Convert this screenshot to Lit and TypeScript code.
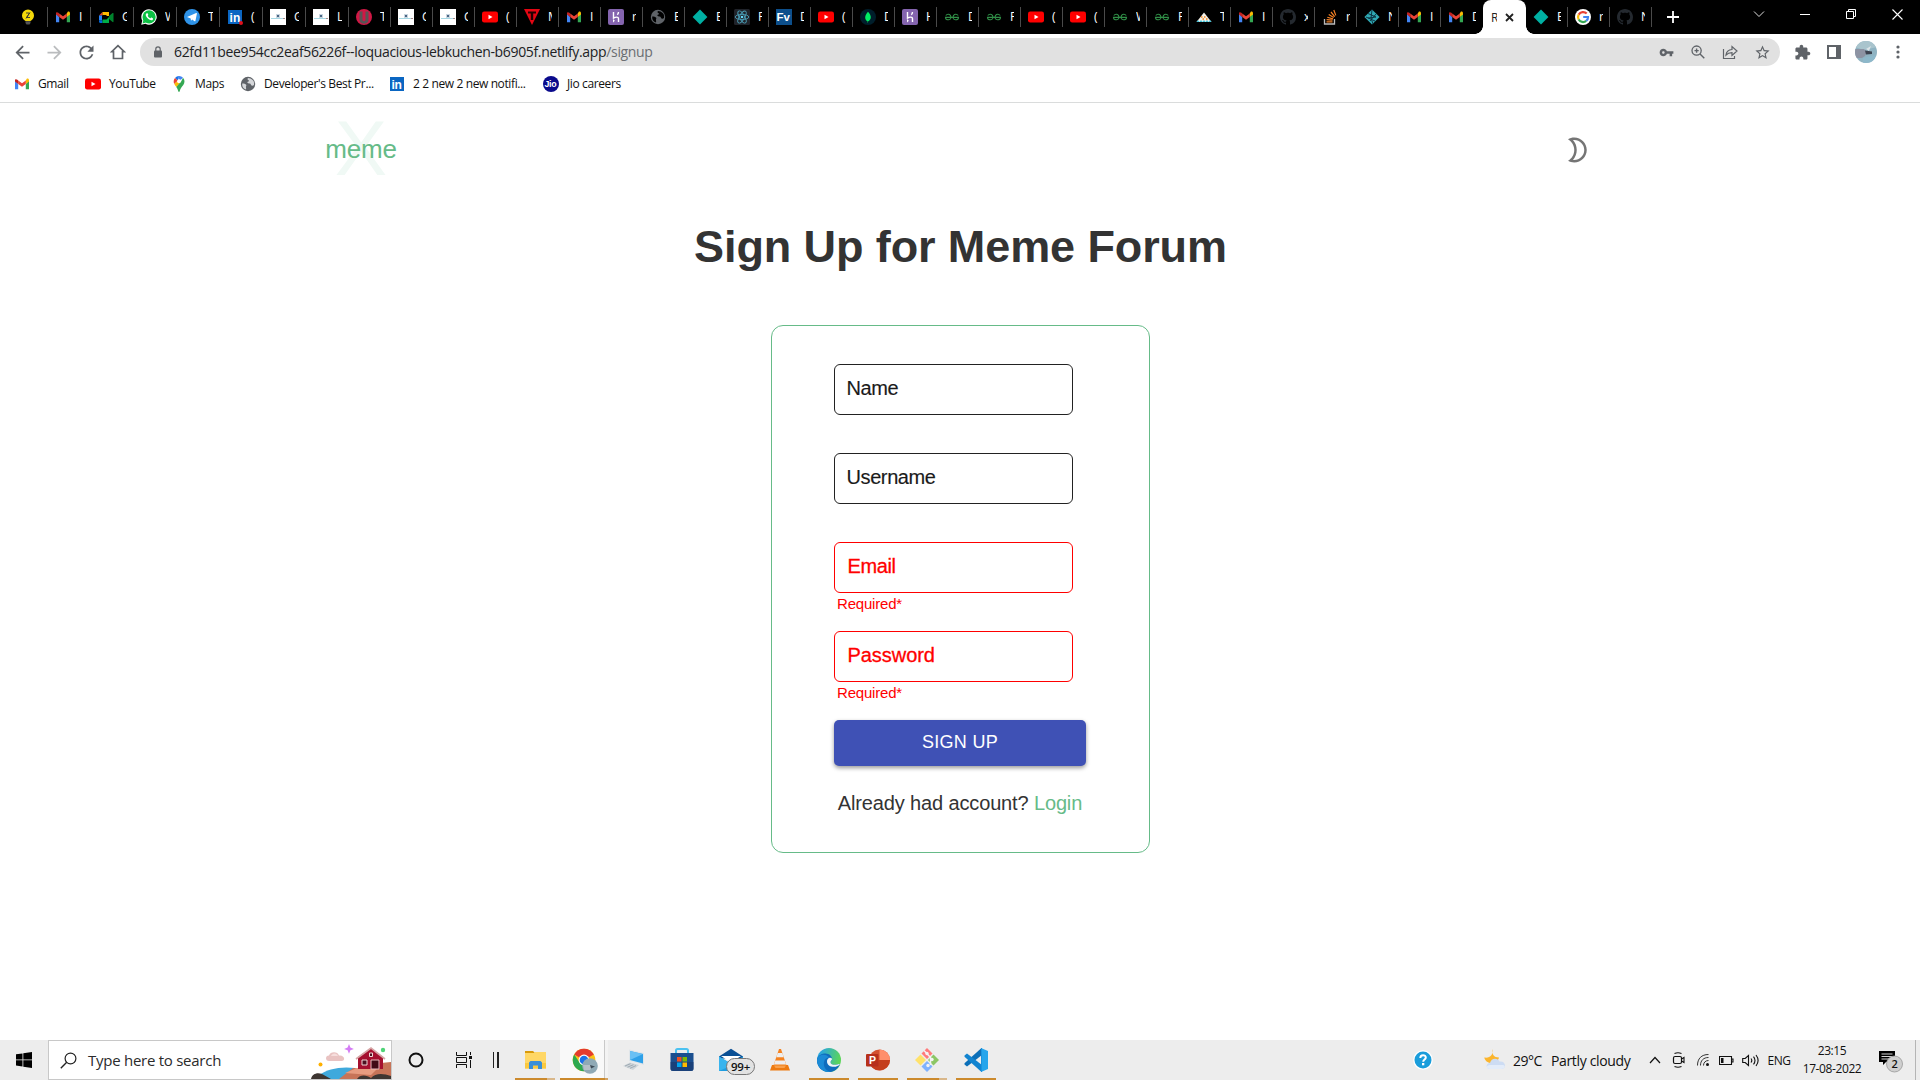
import { LitElement, html, css, svg, TemplateResult } from "lit";
import { customElement } from "lit/decorators.js";
import { classMap } from "lit/directives/class-map.js";

const ico = (size: number, box: number, body: unknown) =>
  html`<svg width=${size} height=${size} viewBox="0 0 ${box} ${box}" fill="none">${body}</svg>`;

/* ---------- favicons (16px grid) ---------- */
const fav: Record<string, () => TemplateResult> = {
  bulb: () => ico(16, 16, svg`<path d="M8 .5a6 6 0 0 1 6 6c0 2.500-1.500 4.300-3.500 5.500h-5C3.500 10.800 2 9 2 6.500a6 6 0 0 1 6-6z" fill="#f5d90a"/><path d="M5.500 12.300h5v1.700L9.500 15.500h-3L5.500 14z" fill="#555"/><path d="M6 4h3.500L6.500 8.500H10M6 9.500L10 3.500" stroke="#333" stroke-width=".9"/>`),
  gmail: () => ico(16, 16, svg`<path d="M1 4.200v9h3.200V8z" fill="#4285f4"/><path d="M15 4.200v9h-3.200V8z" fill="#34a853"/><path d="M11.800 4.400V8L15 5.600V4.200c0-1.700-1.600-1.900-2.400-1.300z" fill="#fbbc04"/><path d="M4.200 8V4.400L8 7.200l3.800-2.800V8L8 10.800z" fill="#ea4335"/><path d="M1 4.200v1.400L4.200 8V4.400l-.8-.6C2.400 2.900 1 3 1 4.200z" fill="#c5221f"/>`),
  meet: () => ico(16, 16, svg`<path d="M1 6.500L4.500 3v3.500z" fill="#ea4335"/><path d="M1 6.500h3v5H1z" fill="#2684fc"/><path d="M4.500 3H11v4H8.500V6H4.500z" fill="#ffba00"/><path d="M1 11.500h3.500V14H2.200C1.500 14 1 13.500 1 12.800z" fill="#0066da"/><path d="M4.500 10.500h4L11 8v6H4.500z" fill="#00ac47"/><path d="M11 7l3.600-3c.4-.3.900 0 .9.400v8.200c0 .5-.5.700-.9.400L11 10z" fill="#00832d"/>`),
  whatsapp: () => ico(16, 16, svg`<path d="M8 .2a7.700 7.700 0 0 0-6.700 11.500L.2 15.800l4.200-1.100A7.700 7.700 0 1 0 8 .2z" fill="#fff"/><circle cx="8.100" cy="7.900" r="6.600" fill="#0cc144"/><path d="M1.500 14.500l1-3.500 2.500 2.600z" fill="#0cc144"/><path d="M5.700 4.300c-1.800 1-.8 3.500 1.200 5.300s4.300 2.400 5 .8c.5-1.100-.2-1.300-1.400-1.900-.6-.2-.8.900-1.300.7-1.200-.5-2.100-1.400-2.500-2.400.1-.5.800-.6.500-1.300-.4-1-.6-1.500-1.500-1.200z" fill="#fff"/>`),
  telegram: () => ico(16, 16, svg`<circle cx="8" cy="8" r="8" fill="#2f93e8"/><path d="M3 7.900l9.200-3.800c.5-.2.800.1.700.6l-1.500 7.200c-.1.500-.5.600-.9.300L8.200 10.600l-1.200 1.100-.3-2.300z" fill="#fff"/>`),
  linkedin: () => ico(16, 16, svg`<rect x="1" y="1" width="14" height="14" fill="#0a66c2"/><text x="2.600" y="12.800" font-family="Liberation Sans, sans-serif" font-size="12" font-weight="700" fill="#fff">in</text>`),
  linkedinDot: () => ico(16, 16, svg`<rect x="1" y="1" width="14" height="14" fill="#0a66c2"/><text x="2.600" y="12.800" font-family="Liberation Sans, sans-serif" font-size="12" font-weight="700" fill="#fff">in</text><circle cx="14" cy="14" r="2" fill="#e0101c"/>`),
  page: () => ico(16, 16, svg`<rect width="16" height="16" fill="#fff"/><path d="M1 9.500h14" stroke="#a5d8e4"/><rect x="6" y="5" width="4" height="4" fill="#c9d6e0"/><rect x="7" y="6" width="2" height="2" fill="#4a6684"/><rect x="13" y="9" width="2" height="1" fill="#a88"/>`),
  udemy: () => ico(16, 16, svg`<circle cx="8" cy="8" r="8" fill="#d01845"/><path d="M3.500 2.500h3v8c0 2 3 2 3 0v-8h3v8.500c0 5-9 5-9 0z" fill="#5a5355"/>`),
  youtube: () => ico(16, 16, svg`<rect x="0" y="2.500" width="16" height="11" rx="2.200" fill="#f00"/><path d="M6.500 5.800v4.400L10.500 8z" fill="#fff"/>`),
  t: () => ico(16, 16, svg`<path d="M0 0h16L8 16z" fill="#e30613"/><path d="M4 2.500h8v2H9.200V11H6.800V4.500H4z" fill="#200"/>`),
  heroku: () => ico(16, 16, svg`<rect width="16" height="16" rx="2" fill="#8464ae"/><path d="M5.500 3v6c2-1 5-1.500 5 .5V13M10.500 3c0 1.200-.4 2-1.200 2.800" stroke="#fff" stroke-width="1.400"/><path d="M5 10v3.500l1.900-1.700z" fill="#fff"/>`),
  globe: () => ico(16, 16, svg`<circle cx="8" cy="8" r="7.200" fill="#5f6368"/><path d="M2.200 7.500c1.800 0 3.300.2 4 1.300.6 1-.6 1.500-.2 2.600.3.900.2 1.600-.3 2.200A6 6 0 0 1 2.200 7.500zM8 2c-1 1.200-.3 1.900.8 2.200.4 1-.5 1.600-1.600 1.800.3 1.500 1.500 1.300 2.800 1.600 1.200.4.600 2 2 2.200.8.100 1.400-.2 2-.8A6 6 0 0 0 10.500 2.400z" fill="#d5d7da"/>`),
  darkGlobe: () => ico(16, 16, svg`<circle cx="8" cy="8" r="7.200" fill="#5f6368"/><path d="M2.200 7.500c1.800 0 3.300.2 4 1.300.6 1-.6 1.500-.2 2.600.3.900.2 1.600-.3 2.200A6 6 0 0 1 2.200 7.500zM8 2c-1 1.200-.3 1.900.8 2.200.4 1-.5 1.600-1.600 1.800.3 1.500 1.500 1.300 2.800 1.600 1.200.4.600 2 2 2.200.8.100 1.400-.2 2-.8A6 6 0 0 0 10.500 2.400z" fill="#000"/>`),
  diamond: () => ico(16, 16, svg`<path d="M8 .6L15.400 8 8 15.400.6 8z" fill="#00b0a3"/>`),
  react: () => ico(16, 16, svg`<rect width="16" height="16" rx="1.500" fill="#20232a"/><g stroke="#4a9db5" stroke-width=".9"><ellipse cx="8" cy="8" rx="6.800" ry="2.600"/><ellipse cx="8" cy="8" rx="6.800" ry="2.600" transform="rotate(60 8 8)"/><ellipse cx="8" cy="8" rx="6.800" ry="2.600" transform="rotate(120 8 8)"/></g><circle cx="8" cy="8" r="1.300" fill="#61dafb"/>`),
  fv: () => ico(16, 16, svg`<rect width="16" height="16" fill="#0d4f8b"/><text x=".4" y="12" font-family="Liberation Sans, sans-serif" font-size="11.500" font-weight="700" fill="#fff">Fv</text>`),
  mongo: () => ico(16, 16, svg`<circle cx="8" cy="8" r="8" fill="#001e2b"/><path d="M8 2.800c4 4 3.400 8 0 9.800V14H7.700v-1.400c-3.300-2-3.400-5.800.3-9.800z" fill="#00ed64"/>`),
  gfg: () => ico(16, 16, svg`<path d="M1.800 6.500C3 5 5.200 4.800 6.400 6.400c1.200 2 .3 4.400-1.800 4.400S1.500 10 1.500 8.400h13c0 1.600-1 2.400-3.100 2.400s-3-2.400-1.800-4.400c1.200-1.600 3.400-1.400 4.600.1" stroke="#2f8d46" stroke-width="1.100"/>`),
  tri: () => ico(16, 16, svg`<path d="M8 3.500L15.500 13H.5z" fill="#f3f0e8"/><path d="M5 7h1.500v2H5zM8 7h1.500v2H8zM6.500 9H8v2H6.500zM10 9h1.500v2H10z" fill="#f6a04d"/><path d="M.5 13l1.500-2 1.500 2 1.500-2 1.500 2L8 11l1.500 2 1.500-2 1.500 2 1.500-2 1.500 2z" fill="#3fc0d8"/>`),
  github: () => ico(16, 16, svg`<path fill="#24292f" d="M8 0C3.580 0 0 3.580 0 8c0 3.540 2.290 6.530 5.470 7.590.4.070.55-.17.55-.38 0-.19-.01-.82-.01-1.490-2.010.37-2.530-.49-2.690-.94-.09-.23-.48-.94-.82-1.130-.28-.15-.68-.52-.01-.53.63-.01 1.080.58 1.230.82.72 1.210 1.870.87 2.330.66.07-.52.28-.87.51-1.070-1.780-.2-3.640-.89-3.640-3.950 0-.87.31-1.590.82-2.150-.08-.2-.36-1.020.08-2.120 0 0 .67-.21 2.200.82.640-.18 1.320-.27 2-.27s1.360.09 2 .27c1.530-1.040 2.200-.82 2.200-.82.44 1.100.16 1.920.08 2.120.51.56.82 1.270.82 2.150 0 3.070-1.870 3.750-3.650 3.950.29.25.54.73.54 1.480 0 1.070-.01 1.930-.01 2.200 0 .21.15.46.55.38A8.010 8.010 0 0 0 16 8c0-4.420-3.580-8-8-8z"/>`),
  so: () => ico(16, 16, svg`<path d="M2.500 10v5h10v-5" stroke="#bcbbbb" stroke-width="1.300"/><path d="M4.500 12.800h6M4.600 10.600l5.900.6M5.300 8.200l5.700 1.700M6.700 5.600l5 3M9 3l3.700 4.600M11.800 1l2 5.400" stroke="#f48024" stroke-width="1.200"/>`),
  netlify: () => ico(16, 16, svg`<path d="M8 .4L15.600 8 8 15.600.4 8z" fill="#2fa9b3"/><path d="M4 4.500l8 3.500M2 8l9 4M8 1l-1 8 2 6M12 5l-6 7M4 9l8-1" stroke="#0a2a3a" stroke-width=".9"/>`),
  google: () => ico(16, 16, svg`<circle cx="8" cy="8" r="8" fill="#fff"/><g stroke-width="2.200"><path d="M11.700 4.600A5 5 0 0 0 3.700 5.600" stroke="#ea4335"/><path d="M3.700 5.600a5 5 0 0 0 0 4.900" stroke="#fbbc05"/><path d="M3.700 10.500a5 5 0 0 0 7.500 1.400" stroke="#34a853"/><path d="M11.200 11.900A4.600 4.600 0 0 0 13 8H8.200" stroke="#4285f4"/></g>`),
  maps: () => ico(16, 16, svg`<path d="M8 0a5.300 5.300 0 0 0-4 1.900l3 2.600z" fill="#1a73e8"/><path d="M4 1.900C2.400 3.800 2.300 6 3.300 8L7 4.500z" fill="#ea4335"/><path d="M8 0C6.500 1.500 7 3.500 9.700 3.800L12 1.700A5.300 5.300 0 0 0 8 0z" fill="#4285f4"/><path d="M3.300 8c.5 1 1.200 1.900 2 2.900L10 6.500 7 4.500z" fill="#fbbc04"/><path d="M12 1.700C14 4 13.800 7 12.300 9 10.500 11.300 9.300 12.500 8.700 15.300c-.2.800-1.200.8-1.400 0-.4-1.800-1.100-3.100-2-4.400l5-5.600z" fill="#34a853"/><circle cx="8" cy="5.300" r="1.900" fill="#fff"/>`),
  jio: () => ico(16, 16, svg`<circle cx="8" cy="8" r="8" fill="#0a0a8c"/><text x="1.600" y="11" font-family="Liberation Sans, sans-serif" font-size="8.800" font-weight="700" fill="#fff">Jio</text>`),
};

type Tab = [icon: string, title: string];
const TABS_BEFORE: Tab[] = [
  ["bulb", ""], ["gmail", "I"], ["meet", "G"], ["whatsapp", "W"], ["telegram", "T"], ["linkedinDot", "("],
  ["page", "G"], ["page", "L"], ["udemy", "T"], ["page", "G"], ["page", "G"], ["youtube", "("], ["t", "M"],
  ["gmail", "I"], ["heroku", "r"], ["darkGlobe", "E"], ["diamond", "E"], ["react", "F"], ["fv", "D"],
  ["youtube", "("], ["mongo", "D"], ["heroku", "H"], ["gfg", "D"], ["gfg", "F"], ["youtube", "("],
  ["youtube", "("], ["gfg", "W"], ["gfg", "F"], ["tri", "T"], ["gmail", "I"], ["github", "x"], ["so", "r"],
  ["netlify", "N"], ["gmail", "I"], ["gmail", "D"],
];
const TABS_AFTER: Tab[] = [["diamond", "E"], ["google", "r"], ["github", "N"]];
const BOOKMARKS: [icon: string, label: string, width: number][] = [
  ["gmail", "Gmail", 71], ["youtube", "YouTube", 86], ["maps", "Maps", 69],
  ["globe", "Developer's Best Pr...", 149], ["linkedin", "2 2 new 2 new notifi...", 154], ["jio", "Jio careers", 90],
];

const g = "#5f6368";
const glyph = (size: number, d: string, color = g) => ico(size, 24, svg`<path d=${d} fill=${color}/>`);

@customElement("browser-chrome")
class BrowserChrome extends LitElement {
  static styles = css`
    :host { display: block; font-family: "Open Sans", "Noto Sans", sans-serif; }
    svg { display: block; flex: none; }
    .strip { height: 34px; background: #000; display: flex; padding-left: 5px; }
    .tab { box-sizing: border-box; width: 42px; height: 34px; padding-left: 7px; display: flex; align-items: center; gap: 8px;
      background: linear-gradient(#4a4a4a, #4a4a4a) no-repeat right 7px / 1px 20px; }
    .tab.wide { width: 43px; }
    .tab.first { padding-left: 15px; }
    .tab.bare { background: none; }
    .title { width: 4px; overflow: hidden; color: #fff; font-size: 12px; line-height: 16px; white-space: nowrap; }
    .wide .title { width: 5px; }
    .active { width: 43px; height: 34px; background: #fff; border-radius: 8px 8px 0 0; display: flex; align-items: center;
      box-sizing: border-box; padding-left: 8px; gap: 8px; font-size: 12px; color: #222; position: relative; }
    .active span { width: 6px; overflow: hidden; }
    .active::before, .active::after { content: ""; position: absolute; bottom: 0; width: 8px; height: 8px; }
    .active::before { left: -8px; background: radial-gradient(circle at 0 0, transparent 7.500px, #fff 8px); }
    .active::after { right: -8px; background: radial-gradient(circle at 100% 0, transparent 7.500px, #fff 8px); }
    .plus { width: 42px; display: grid; place-items: center; }
    .controls { margin-left: auto; display: flex; height: 28px; }
    .controls div { width: 46px; display: grid; place-items: center; }
    .toolbar { height: 36px; display: flex; background: #fff; align-items: center; padding: 0 6px; }
    .btn { width: 32px; height: 32px; display: grid; place-items: center; flex: none; }
    .pill { flex: 1; margin: 0 6px; height: 28px; border-radius: 14px; background: #e1e1e1; display: flex; align-items: center;
      padding: 0 2px 0 12px; }
    .url { font-size: 14px; color: #202124; margin-left: 10px; flex: 1; letter-spacing: -0.34px; white-space: nowrap; line-height: 20px; padding-bottom: 1px; }
    .url span { color: #6b6e72; }
    .avatar { width: 22px; height: 22px; border-radius: 50%; overflow: hidden; }
    .marks { height: 32px; border-bottom: 1px solid #dadcdc; display: flex; padding-left: 14px; background: #fff; }
    .mark { display: flex; align-items: center; gap: 8px; height: 28px; font-size: 12px; letter-spacing: -0.38px; color: #111; white-space: nowrap; }
    .mark span { padding-bottom: 1px; }
  `;
  tab([icon, title]: Tab, wide: boolean, first: boolean, bare = false) {
    return html`<div class=${classMap({ tab: true, wide, first, bare })}>${fav[icon]()}${title ? html`<span class="title">${title}</span>` : ""}</div>`;
  }
  render() {
    return html`
      <div class="strip">
        ${TABS_BEFORE.map((t, i) => this.tab(t, i < 8, i === 0, i === TABS_BEFORE.length - 1))}
        <div class="active"><span>R</span>${ico(9, 9, svg`<path d="M1 1l7 7M8 1L1 8" stroke="#222" stroke-width="1.800"/>`)}</div>
        ${TABS_AFTER.map((t) => this.tab(t, false, false))}
        <div class="plus">${ico(12, 12, svg`<path d="M6 0v12M0 6h12" stroke="#fff" stroke-width="1.800"/>`)}</div>
        <div class="controls">
          <div>${ico(12, 12, svg`<path d="M1 3.500l5 5 5-5" stroke="#ddd"/>`)}</div>
          <div>${ico(10, 10, svg`<path d="M0 5.500h10" stroke="#fff"/>`)}</div>
          <div>${ico(10, 10, svg`<path d="M.5 2.500h7v7h-7zM2.500 2V.5h7v7H8" stroke="#fff"/>`)}</div>
          <div>${ico(11, 11, svg`<path d="M.5.5l10 10M10.500.5l-10 10" stroke="#fff" stroke-width="1.100"/>`)}</div>
        </div>
      </div>
      <div class="toolbar">
        <div class="btn">${glyph(21, "M20 11H7.830l5.590-5.590L12 4l-8 8 8 8 1.410-1.410L7.830 13H20v-2z")}</div>
        <div class="btn">${glyph(21, "M12 4l-1.410 1.410L16.170 11H4v2h12.170l-5.580 5.590L12 20l8-8z", "#babcbe")}</div>
        <div class="btn">${glyph(21, "M17.650 6.350C16.200 4.900 14.210 4 12 4c-4.420 0-7.990 3.580-7.990 8s3.570 8 7.990 8c3.730 0 6.840-2.550 7.730-6h-2.080c-.82 2.330-3.040 4-5.650 4-3.310 0-6-2.690-6-6s2.690-6 6-6c1.660 0 3.140.69 4.220 1.780L13 11h7V4l-2.350 2.350z")}</div>
        <div class="btn">${ico(16, 16, svg`<path d="M8 1.700L1.700 7.700H3.500V14.500h9V7.700h1.800z" stroke=${g} stroke-width="1.700"/>`)}</div>
        <div class="pill">
          ${ico(12, 12, svg`<rect x="2" y="4.500" width="8" height="7" rx="1" fill=${g}/><path d="M3.800 5V3a2.200 2.200 0 0 1 4.400 0v2" stroke=${g} stroke-width="1.200"/>`)}
          <div class="url">62fd11bee954cc2eaf56226f--loquacious-lebkuchen-b6905f.netlify.app<span>/signup</span></div>
          <div class="btn">${glyph(15, "M12.650 10C11.830 7.670 9.610 6 7 6c-3.310 0-6 2.690-6 6s2.690 6 6 6c2.610 0 4.830-1.670 5.650-4H17v4h4v-4h2v-4H12.650zM7 14c-1.100 0-2-.9-2-2s.9-2 2-2 2 .9 2 2-.9 2-2 2z")}</div>
          <div class="btn">${ico(14, 14, svg`<circle cx="5.600" cy="5.600" r="4.600" stroke=${g} stroke-width="1.300"/><path d="M9 9l4.300 4.300M5.600 3.500v4.200M3.500 5.600h4.200" stroke=${g} stroke-width="1.400"/>`)}</div>
          <div class="btn">${ico(16, 16, svg`<path d="M1.500 5v9.500h11V12M4 11c.4-3.800 2.400-5.300 6-5.500V2.500l5 4.500-5 4.500V8.600C7.200 8.600 5.500 9.300 4 11z" stroke=${g} stroke-width="1.200"/>`)}</div>
          <div class="btn">${glyph(17, "M22 9.240l-7.190-.62L12 2 9.190 8.630 2 9.240l5.460 4.730L5.820 21 12 17.270 18.180 21l-1.630-7.030L22 9.240zM12 15.400l-3.760 2.270 1-4.280-3.320-2.880 4.380-.38L12 6.100l1.710 4.040 4.380.38-3.320 2.880 1 4.280L12 15.400z")}</div>
        </div>
        <div class="btn">${glyph(17, "M20.500 11H19V7c0-1.100-.9-2-2-2h-4V3.500C13 2.120 11.880 1 10.500 1S8 2.120 8 3.500V5H4c-1.100 0-1.990.9-1.990 2v3.800H3.500c1.490 0 2.700 1.210 2.700 2.700s-1.210 2.700-2.700 2.700H2V20c0 1.100.9 2 2 2h3.800v-1.500c0-1.490 1.210-2.700 2.700-2.700 1.490 0 2.700 1.210 2.700 2.700V22H17c1.100 0 2-.9 2-2v-4h1.500c1.380 0 2.500-1.120 2.500-2.500S21.880 11 20.500 11z")}</div>
        <div class="btn">${ico(14, 14, svg`<path d="M1 1h12v12H1z" stroke=${g} stroke-width="2"/><path d="M9 1h4v12H9z" fill=${g}/>`)}</div>
        <div class="btn"><div class="avatar">${ico(22, 22, svg`<rect width="22" height="22" fill="#8fb3c2"/><path d="M0 0h22v6L9 9 0 6z" fill="#a9c4cd"/><path d="M0 8h9l3 3-2 4-3 2H0z" fill="#8d93a3"/><path d="M10 9.500l7 1v2.500l-6 .5z" fill="#3c4350"/><path d="M11 8l5-3-2 5z" fill="#dbe4e8"/><path d="M8 17l12-3v8H8z" fill="#8db8ca"/>`)}</div></div>
        <div class="btn">${ico(16, 16, svg`<g fill=${g}><circle cx="8" cy="3" r="1.600"/><circle cx="8" cy="8" r="1.600"/><circle cx="8" cy="13" r="1.600"/></g>`)}</div>
      </div>
      <div class="marks">
        ${BOOKMARKS.map(([icon, label, width]) => html`<div class="mark" style="width:${width}px">${fav[icon]()}<span>${label}</span></div>`)}
      </div>`;
  }
}

@customElement("signup-page")
class SignupPage extends LitElement {
  static styles = css`
    :host { display: block; flex: 1; background: #fff; font-family: "Liberation Sans", Arial, sans-serif; color: #333; }
    svg { display: block; }
    header { height: 94px; display: flex; justify-content: space-between; padding: 0 327px 0 325px; }
    .logo { display: grid; width: 72px; color: #66bb88; }
    .logo span { grid-area: 1 / 1; justify-self: center; white-space: nowrap; }
    .big { font-size: 78.500px; line-height: 94px; color: #f0f9f5; margin-top: -2px; }
    .small { font-size: 26px; line-height: 94px; z-index: 1; margin-top: -1px; letter-spacing: -0.2px; }
    .moon { margin-top: 32px; }
    h1 { margin: 23px 0 0; text-align: center; font-size: 45px; line-height: 54px; letter-spacing: -0.1px; padding-left: 1px; }
    .card { box-sizing: border-box; width: 379px; height: 528px; margin: 51px 0 0 771px; border: 1px solid #66bb88; border-radius: 12px;
      padding: 38px 0 0 62px; }
    .field { height: 89px; }
    .box { box-sizing: border-box; width: 239px; height: 51px; border: 1px solid #222; border-radius: 6px; padding-left: 11.500px;
      font-size: 20px; line-height: 47px; color: #1a1a1a; letter-spacing: -0.4px; -webkit-text-stroke: 0.15px #1a1a1a; }
    .error .box { border-color: #f00; color: #f00; padding-left: 12.500px; -webkit-text-stroke: 0.3px #f00; }
    .loose .box { letter-spacing: -0.05px; }
    .hint { color: #f00; font-size: 15px; letter-spacing: -0.2px; line-height: 18px; padding: 2px 0 0 3px; }
    .submit { width: 252px; height: 46px; border-radius: 5px; background: #3f51b5; color: #fff; text-align: center; font-size: 18px;
      line-height: 44px; letter-spacing: 0.3px; box-shadow: 0 2px 4px rgba(0, 0, 0, .4); }
    .login { width: 252px; text-align: center; font-size: 20px; line-height: 24px; margin-top: 25px; white-space: nowrap; letter-spacing: -0.14px; }
    .login span { color: #66bb88; }
  `;
  field(label: string, error: boolean, loose = false) {
    return html`<div class=${classMap({ field: true, error, loose })}><div class="box">${label}</div>${error ? html`<div class="hint">Required*</div>` : ""}</div>`;
  }
  render() {
    return html`
      <header>
        <div class="logo"><span class="big">X</span><span class="small">meme</span></div>
        <div class="moon">${glyph(30, "M9 4c4.410 0 8 3.590 8 8s-3.590 8-8 8c-.34 0-.68-.02-1.010-.07C9.910 17.770 11 14.950 11 12s-1.090-5.770-3.010-7.930C8.320 4.020 8.660 4 9 4m0-2c-1.820 0-3.530.5-5 1.350C6.990 5.080 9 8.300 9 12s-2.010 6.920-5 8.650C5.470 21.500 7.180 22 9 22c5.520 0 10-4.480 10-10S14.520 2 9 2z", "#757575")}</div>
      </header>
      <h1>Sign Up for Meme Forum</h1>
      <div class="card">
        ${this.field("Name", false)}${this.field("Username", false)}${this.field("Email", true)}${this.field("Password", true, true)}
        <div class="submit">SIGN UP</div>
        <div class="login">Already had account? <span>Login</span></div>
      </div>`;
  }
}

/* ---------- taskbar artwork (24px grid) ---------- */
const app: Record<string, TemplateResult> = {
  explorer: ico(24, 24, svg`<path d="M2 3h8l2 2h-10z" fill="#d99a0b"/><path d="M2 5h9l1-1h11v16.500H2z" fill="#ffd766"/><path d="M2 15h21v5.500H2z" fill="#fbc93e"/><path d="M6 21v-6.500L7.500 13h10L19 14.500V21h-4v-3.500h-5V21z" fill="#3a8fd8"/>`),
  chrome: html`<svg width="26" height="26" viewBox="0 0 26 26" class="chrome"><circle cx="12" cy="12" r="11.300" fill="#fbc116"/><path d="M12 12L2.200 6.400A11.300 11.300 0 0 1 21.800 6.400z" fill="#e33b2e"/><path d="M2.200 6.400A11.300 11.300 0 0 0 12 23.300l4.500-8.600L7.500 14.500z" fill="#2da94f"/><circle cx="12" cy="12" r="5.400" fill="#fff"/><circle cx="12" cy="12" r="4.300" fill="#1a73e8"/><circle cx="18" cy="18" r="7.800" fill="#8fa9b5"/><path d="M11 17h7l2 2-2 3h-6z" fill="#b5c0c7"/><path d="M18 17l5 1.500-4 2z" fill="#3d4a55"/></svg>`,
  pc: ico(24, 24, svg`<path d="M8 1.500l15 3.500v12L8 13z" fill="#dfe5e9"/><path d="M9 3l13 3v9.500L9 12z" fill="#2ea0e8"/><path d="M9 3l13 3-13 6z" fill="#69c0f4"/><path d="M2 18l7-3.500 9 2.500-6 5z" fill="#cfd5d9"/><path d="M4 18l5.500-2.300M6.500 19.200l6-2.500M9 20.300l6-2.700" stroke="#93a0a9" stroke-width=".8"/>`),
  store: ico(24, 24, svg`<path d="M6 6V2.500C6 1.500 6.500 1 7.500 1h9c1 0 1.500.5 1.500 1.500V6" stroke="#4cc2f1" stroke-width="2"/><path d="M.5 5h23v15.500a2.500 2.500 0 0 1-2.500 2.500H3a2.500 2.500 0 0 1-2.500-2.500z" fill="#1b4f8f"/><path d="M.5 14h23v6.500a2.500 2.500 0 0 1-2.500 2.500H3a2.500 2.500 0 0 1-2.500-2.500z" fill="#1a3c70" opacity=".7"/><path d="M7 9h4.500v4.500H7z" fill="#f25022"/><path d="M12.500 9H17v4.500h-4.500z" fill="#7fba00"/><path d="M7 14.500h4.500V19H7z" fill="#00a4ef"/><path d="M12.500 14.500H17V19h-4.500z" fill="#ffb900"/>`),
  mail: ico(24, 24, svg`<path d="M0 8.500L12 .8l12 7.700v2H0z" fill="#0a4f94"/><path d="M0 8.500l12 7.200 12-7.200V23H0z" fill="#1f9de0"/><path d="M0 8.500L14 17 0 23z" fill="#39b4ee"/><path d="M2 8h20l-10 6.500z" fill="#fff"/>`),
  vlc: ico(24, 24, svg`<path d="M11 1h2l6 18H5z" fill="#f58220"/><path d="M9.700 5h4.600l1.400 4.200H8.300zM7.200 12.500h9.600l1.300 4H5.900z" fill="#eee"/><path d="M4 17h16l2 5.500H2z" fill="#ee7a10"/><path d="M6 17.500h12L16.500 20h-9z" fill="#f9a04a"/>`),
  edge: html`<svg width="24" height="24" viewBox="0 0 24 24"><defs><linearGradient id="eg" x1="0" y1="0" x2="1" y2=".3"><stop offset=".2" stop-color="#2aa7dc"/><stop offset="1" stop-color="#5bd55a"/></linearGradient></defs><circle cx="12" cy="12" r="12" fill="url(#eg)"/><path d="M0 12C.5 7 5 5.500 8.500 5.500c4 0 6.500 3 6.500 5.500 0 1.500-1.500 2-1.500 3.200 0 2 3 2.800 5.500 2.500 2-.2 3-.8 3.800-.5C21 21 17 24 12 24 5 24 0 19 0 12z" fill="#0f6cbd"/><path d="M8.500 11c-3.500 4-1.500 12 5.500 12.700C6 25 0 19 0 12c.5-4 4-5.500 7-5.300 3.500.3 5 2.500 5 3-1.200-.2-2.500.2-3.500 1.300z" fill="#1b8ad6"/><path d="M12 10c2-.8 3.200.5 3 1.300-.2 1-1.500 1.600-1.500 2.900 0 2 3 2.800 5.500 2.500 2.500-.3 3-.9 3.800-.5-1.500 3.300-12.800 4.500-12.800-3 0-1.500 1-2.800 2-3.200z" fill="#eef4f8"/></svg>`,
  ppt: ico(24, 24, svg`<circle cx="13.500" cy="12" r="10.500" fill="#d35230"/><path d="M13.500 1.500A10.500 10.500 0 0 1 24 12H13.500z" fill="#ff8f6b"/><path d="M3.500 15A10.500 10.500 0 0 0 24 12H13.500z" fill="#c43e1c"/><rect x="0" y="6" width="12.500" height="12.500" rx="1" fill="#b7301b"/><text x="3" y="16" font-family="Liberation Sans, sans-serif" font-size="10.500" font-weight="700" fill="#fff">P</text>`),
  git: ico(24, 24, svg`<path d="M12 0l5.500 5.500L12 11 6.500 5.500z" fill="#ff7b7b"/><path d="M5.500 6.500L11 12l-5.500 5.500L0 12z" fill="#ffe26b"/><path d="M18.500 6.500L24 12l-5.500 5.500L13 12z" fill="#8cc665"/><path d="M12 13l5.500 5.500L12 24l-5.500-5.500z" fill="#7fb2ff"/><path d="M9 2.500L16 10M15.500 8.500V17" stroke="#f3f3f3" stroke-width="1.500"/><circle cx="12" cy="5.500" r="1.700" fill="#f3f3f3"/><circle cx="17" cy="11.500" r="1.700" fill="#f3f3f3"/><circle cx="13" cy="17.500" r="1.700" fill="#f3f3f3"/>`),
  code: ico(24, 24, svg`<path d="M17 0l7 3v18l-7 3z" fill="#26a5ec"/><path d="M17.500 0L18 7 3 18.500.5 16.500v-1.300z" fill="#0b6fb8"/><path d="M17.500 24L18 17 3 5.500.5 7.500v1.300z" fill="#1284d0"/><path d="M17 0h1v24h-1z" fill="#1b93de"/>`),
};
const APPS: [name: string, line: "" | "full" | "split", active?: boolean][] = [
  ["explorer", "split"], ["chrome", "", true], ["pc", ""], ["store", ""], ["mail", ""], ["vlc", ""],
  ["edge", "full"], ["ppt", "full"], ["git", "split"], ["code", "full"],
];

@customElement("task-bar")
class TaskBar extends LitElement {
  static styles = css`
    :host { display: flex; height: 40px; background: #ededed; font-family: "Open Sans", "Noto Sans", sans-serif; color: #111; }
    svg { display: block; flex: none; }
    .cell { width: 48px; display: grid; place-items: center; flex: none; }
    .search { box-sizing: border-box; width: 344px; height: 40px; background: #fff; border: 1px solid #c8c8c8; display: flex;
      align-items: center; padding-left: 11px; overflow: hidden; }
    .search span { margin-left: 11px; font-size: 15px; letter-spacing: -0.26px; color: #2b2b2b; flex: 1; }
    .bars { width: 23px; display: flex; align-items: center; gap: 3px; box-sizing: border-box; padding-left: 5px; }
    .bars i { width: 1.300px; height: 16px; background: #222; }
    .apps { display: flex; gap: 1px; }
    .app { width: 48px; height: 40px; box-sizing: border-box; display: grid; place-items: center; position: relative; }
    .chrome { margin: 2px 0 0 2px; }
    .line { position: absolute; left: 4px; bottom: 0; width: 40px; height: 2px; background: #cc8a2d; }
    .split .line { background: linear-gradient(90deg, #cc8a2d 80%, #d9b78a 80%); }
    .active { background: linear-gradient(90deg, #f9f9f9 44px, #c9c9c9 44px, #c9c9c9 45px, #f3f3f3 45px); }
    .active .line { left: 0; width: 48px; background: linear-gradient(90deg, #cc8a2d 45px, #d0a366 45px); }
    .badge { position: absolute; left: 19px; top: 18px; width: 27px; height: 15px; border: 1px solid #777; border-radius: 9px;
      background: #e2e2e2; font-size: 11.500px; font-weight: 600; line-height: 15px; text-align: center; letter-spacing: -0.2px; }
    .tray { margin-left: auto; display: flex; align-items: center; font-size: 14px; white-space: nowrap; }
    .help { width: 20px; margin-right: 49px; }
    .temp { width: 38px; margin-left: 7px; letter-spacing: -0.5px; }
    .sky { width: 92px; letter-spacing: -0.35px; }
    .t { display: grid; place-items: center; height: 40px; }
    .w24 { width: 24px; } .w23 { width: 23px; }
    .lang { width: 34px; text-align: center; font-size: 12px; letter-spacing: -0.4px; }
    .clock { width: 72px; text-align: center; font-size: 12px; line-height: 18px; letter-spacing: -0.4px; }
    .note { width: 47px; height: 40px; display: flex; align-items: center; box-sizing: border-box; padding-left: 10px; }
    .end { width: 4px; height: 40px; border-left: 1px solid #b5b5b5; }
  `;
  render() {
    return html`
      <div class="cell">${ico(16, 16, svg`<path d="M0 2.300l6.500-.9v6.100H0zM7.300 1.300L16 0v7.500H7.300zM0 8.300h6.500v6.200L0 13.600zM7.300 8.300H16V16l-8.700-1.300z" fill="#000"/>`)}</div>
      <div class="search">
        ${ico(17, 17, svg`<circle cx="10.500" cy="6.500" r="5.400" stroke="#222" stroke-width="1.200"/><path d="M6.700 10.300L.8 16.200" stroke="#222" stroke-width="1.400"/>`)}
        <span>Type here to search</span>
        <svg width="80" height="38" viewBox="0 0 80 38">
          <path d="M8 34c8-6 22-9 36-7l6 11H8z" fill="#3fa9dc"/>
          <path d="M28 38l14-11c10 1 18-3 28-5l10-1v17z" fill="#c77458"/><path d="M34 32l12-5 20 1-6 6z" fill="#e79c80"/>
          <path d="M0 38c1-5 6-7 11-5l9 5zM46 38c3-5 10-4 14-1 4-5 12-5 20-2v3z" fill="#3e3632"/>
          <path d="M18 20c-4 0-4-5.500 0-5.500 1-4.500 9-4.500 10 0 5.500-1 7 5.500 2.500 5.500z" fill="#e9c3c2"/><path d="M20 15c1-3.500 6-3.500 7 0z" fill="#f6dedd"/>
          <path d="M38 3l1.400 3.500 3.500 1.400-3.500 1.400L38 12.800l-1.400-3.500-3.500-1.400 3.500-1.400z" fill="#d47cf5"/>
          <circle cx="72" cy="9" r="2.200" fill="#4fd477"/><circle cx="9.500" cy="23.500" r="2" fill="#ffb000"/>
          <path d="M47 16L60 7l12 9v12H47z" fill="#a5102f"/><path d="M45 18L60 7l14 11" stroke="#d7a6a6" stroke-width="1.600" fill="none"/>
          <path d="M60 19h8v9h-8z" fill="#3f0b17" stroke="#e7b9bc"/><path d="M51 19h5v5h-5zM58.500 12h3v3.500h-3z" fill="#4b1020" stroke="#f0d5d5"/>
        </svg>
      </div>
      <div class="cell">${ico(16, 16, svg`<circle cx="8" cy="8" r="6.500" stroke="#111" stroke-width="2"/>`)}</div>
      <div class="cell">${ico(16, 16, svg`<path d="M.5 0v3.500h10V0M.5 16v-3.500h10V16M.5 5.500h10v5H.5zM14.500 0v3M14.500 8v8" stroke="#111"/><rect x="13" y="4" width="3" height="3" fill="#111"/>`)}</div>
      <div class="bars"><i></i><i></i></div>
      <div class="apps">
        ${APPS.map(([name, line, active]) => html`<div class=${classMap({ app: true, split: line === "split", active: !!active })}>
          ${app[name]}${name === "mail" ? html`<div class="badge">99+</div>` : ""}${line || active ? html`<div class="line"></div>` : ""}</div>`)}
      </div>
      <div class="tray">
        <div class="help">${ico(20, 20, svg`<circle cx="10" cy="10" r="9.800" fill="#fff"/><circle cx="10" cy="10" r="8.500" fill="#1a9ddb"/><path d="M7.300 8c0-3.800 5.600-3.500 5.500-.4 0 2-2.600 2-2.600 4.200" stroke="#fff" stroke-width="2"/><rect x="9" y="13" width="2.300" height="2.300" fill="#fff"/>`)}</div>
        ${ico(24, 24, svg`<path d="M10.500 1c-1 5 1.500 8.500 6.500 8.500-1 4.500-6 7-10.500 5C3.500 13.300 2.500 11 2.300 9.500 8 10.500 11.500 6.500 10.500 1z" fill="#fbb52d"/><path d="M8 21c-4.500 0-4.500-6 0-6 1-5.500 8-5.500 9.500-1.500 6.500-1 7.500 7.500 1.500 7.500z" fill="#cddcf3"/><path d="M8 21c-4 0-4.300-4 0-4h13c3 0 2 4-2 4z" fill="#e3ecf9"/>`)}
        <div class="temp">29°C</div><div class="sky">Partly cloudy</div>
        <div class="t w24">${ico(12, 12, svg`<path d="M1 9l5-5.500L11 9" stroke="#111" stroke-width="1.200"/>`)}</div>
        <div class="t w24">${ico(16, 16, svg`<rect x="2.500" y="4.500" width="8" height="7" rx="1.500" stroke="#111" stroke-width="1.200"/><path d="M10.500 7l2.500-1.500v5L10.500 9M3.500 1.500Q7 0 10.500 1.500M3.500 14.500Q7 16 10.500 14.500" stroke="#111" stroke-width="1.100"/>`)}</div>
        <div class="t w24">${ico(14, 14, svg`<circle cx="11.500" cy="11.500" r="1.500" fill="#111"/><path d="M7.500 12.500c0-3 2-5 5-5M4.500 12.500c0-5 3-8 8-8M1.500 12.500c0-7 4-11 11-11" stroke="#333"/>`)}</div>
        <div class="t w23">${ico(15, 15, svg`<path d="M.5 3.500h12v8H.5zM13 6h1v3h-1" stroke="#111" stroke-width="1.100"/><rect x="2" y="5" width="2.500" height="5" fill="#111"/>`)}</div>
        <div class="t w24">${ico(17, 17, svg`<path d="M.7 6.500h2.500l3.300-3v10l-3.300-3H.7zM9 6.500q1.600 2 0 4M11.500 4.700q3 3.800 0 7.600M14 3q4.200 5.500 0 11" stroke="#111" stroke-width="1.100"/>`)}</div>
        <div class="lang">ENG</div>
        <div class="clock">23:15<br />17-08-2022</div>
        <div class="note">${ico(26, 26, svg`<path d="M1 4h16v11H8l-3 3v-3H1z" fill="#000"/><path d="M3.500 7h11M3.500 9.500h11M3.500 12h8" stroke="#ededed" stroke-width=".9"/><circle cx="16.500" cy="17" r="8" fill="#cfcfcf" stroke="#999" stroke-width=".8"/><text x="13.400" y="21.200" font-family="Open Sans, sans-serif" font-size="11" font-weight="600" fill="#111">2</text>`)}</div>
        <div class="end"></div>
      </div>`;
  }
}

@customElement("app-root")
class AppRoot extends LitElement {
  static styles = css`
    :host { display: flex; flex-direction: column; width: 1920px; height: 1080px; overflow: hidden; background: #fff; }
  `;
  render() {
    return html`<browser-chrome></browser-chrome><signup-page></signup-page><task-bar></task-bar>`;
  }
}
